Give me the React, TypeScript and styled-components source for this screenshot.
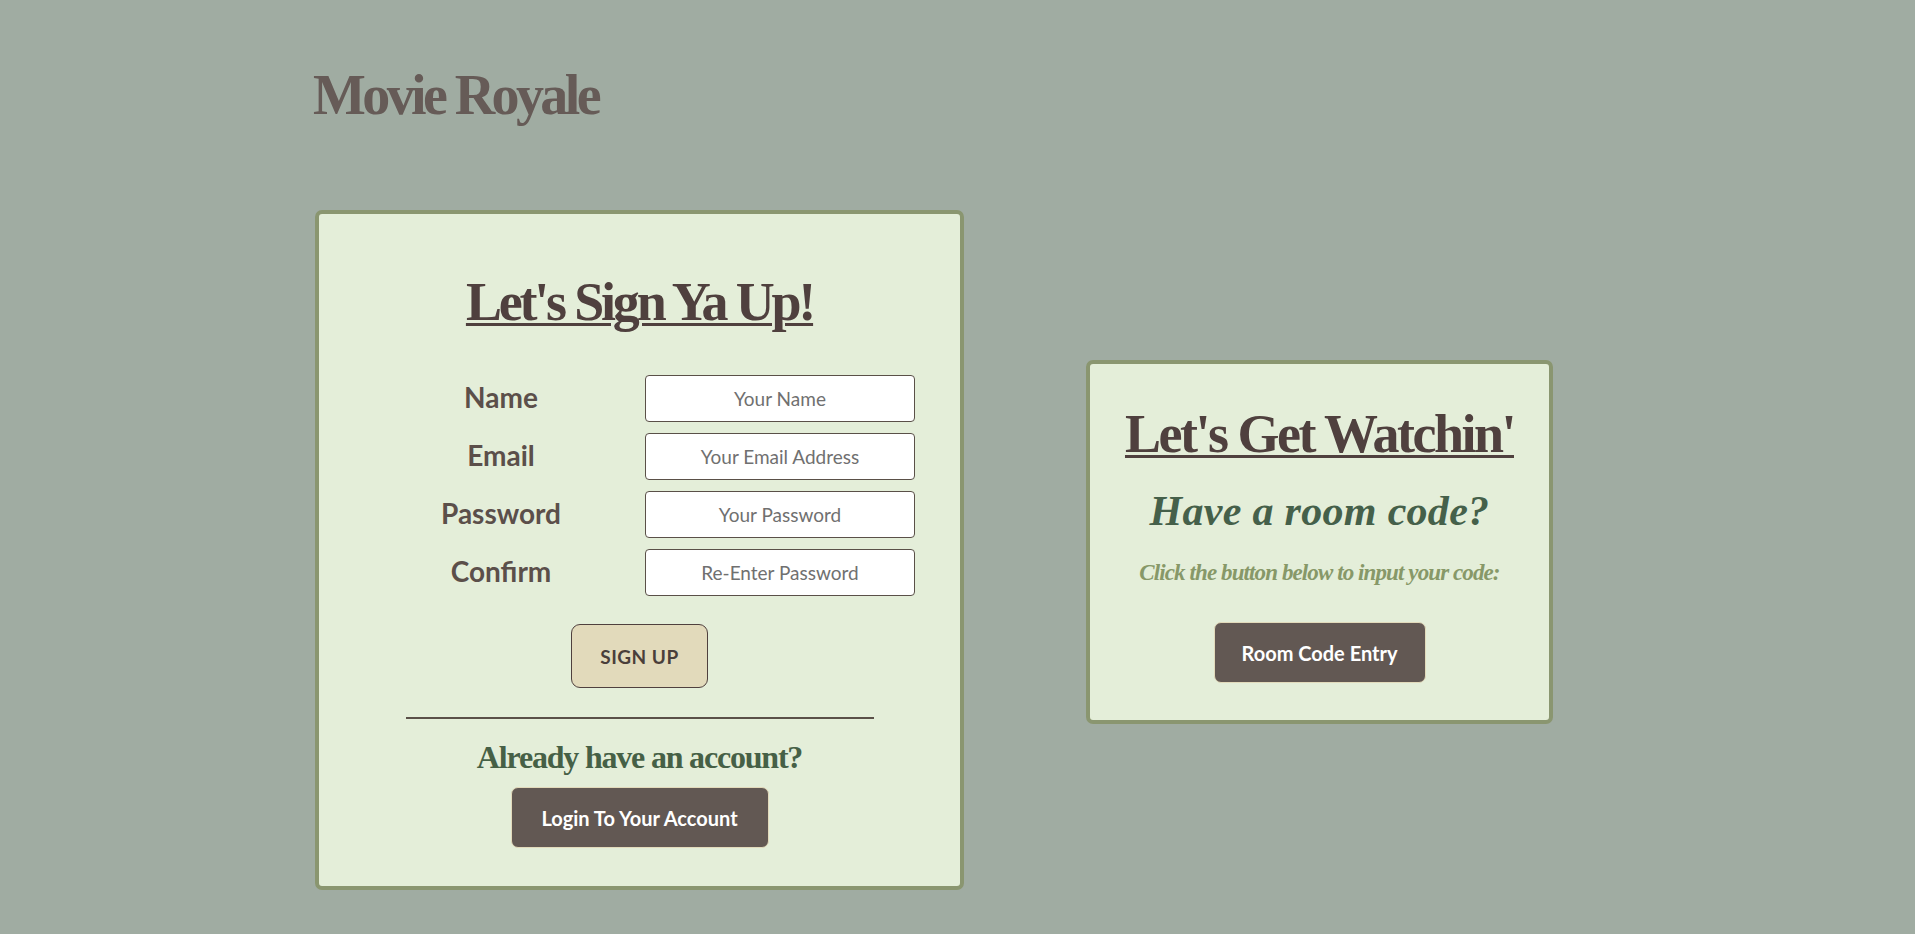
import React from "react";
import styled, { createGlobalStyle } from "styled-components";

const GlobalStyle = createGlobalStyle`
  html, body {
    margin: 0;
    padding: 0;
    background: #a0aca2;
  }
  * { box-sizing: border-box; }
`;

const serif = `"Liberation Serif", "DejaVu Serif", serif`;
const sans = `Lato, "Noto Sans", sans-serif`;

const Page = styled.div`
  min-height: 934px;
  padding: 67px 0 40px 313px;
  display: flex;
  flex-direction: column;
`;

const Brand = styled.h1`
  margin: 0;
  font-family: ${serif};
  font-weight: 700;
  font-size: 56px;
  line-height: 1;
  letter-spacing: -3.6px;
  color: #665b57;
`;

const Cards = styled.div`
  display: flex;
  align-items: flex-start;
  gap: 122px;
  margin-top: 87px;
  padding-left: 2px;
`;

const Card = styled.section<{ $w: number; $top?: number; $pt: number; $pb: number }>`
  width: ${(p) => p.$w}px;
  margin-top: ${(p) => p.$top ?? 0}px;
  background: #e4eed9;
  border: 4px solid #8a9670;
  border-radius: 7px;
  padding: ${(p) => p.$pt}px 0 ${(p) => p.$pb}px;
  display: flex;
  flex-direction: column;
  align-items: center;
`;

const Heading = styled.h2<{ $ls: number }>`
  margin: 0;
  font-family: ${serif};
  font-weight: 700;
  font-size: 54px;
  line-height: 1;
  letter-spacing: ${(p) => p.$ls}px;
  color: #4f403e;
  text-decoration: underline;
  text-decoration-thickness: 3px;
  text-underline-offset: 3px;
`;

const Form = styled.div`
  margin: 46px 0 0 23px;
  display: grid;
  grid-template-columns: 228px 270px;
  column-gap: 30px;
  row-gap: 11px;
  align-items: center;
`;

const Label = styled.label`
  text-align: center;
  font-family: ${sans};
  font-weight: 700;
  font-size: 28px;
  line-height: 1;
  color: #5b4f4a;
  transform: translateY(-2px);
`;

const Input = styled.input`
  height: 47px;
  width: 270px;
  border: 1px solid #5a5048;
  border-radius: 4px;
  background: #ffffff;
  text-align: center;
  font-family: ${sans};
  font-size: 19px;
  color: #333;
  &::placeholder {
    color: #707070;
  }
`;

const SignUpButton = styled.button`
  margin-top: 28px;
  width: 137px;
  height: 64px;
  background: #e2dabb;
  border: 1px solid #4f403e;
  border-radius: 9px;
  font-family: ${sans};
  font-weight: 700;
  font-size: 19px;
  letter-spacing: 0.5px;
  color: #4a3f3a;
`;

const Divider = styled.hr`
  margin: 29px 0 0;
  width: 468px;
  border: 0;
  height: 2px;
  background: #5a5048;
`;

const SubHeading = styled.h3`
  margin: 22px 0 0;
  font-family: ${serif};
  font-weight: 700;
  font-size: 32px;
  line-height: 1;
  letter-spacing: -1.2px;
  color: #466046;
`;

const DarkButton = styled.button<{ $w: number; $h: number; $mt: number }>`
  margin-top: ${(p) => p.$mt}px;
  width: ${(p) => p.$w}px;
  height: ${(p) => p.$h}px;
  background: #625853;
  border: 1px solid #e2dabb;
  border-radius: 7px;
  font-family: ${sans};
  font-weight: 700;
  font-size: 20px;
  color: #ffffff;
`;

const RoomQuestion = styled.p`
  margin: 29px 0 0;
  font-family: ${serif};
  font-style: italic;
  font-weight: 700;
  font-size: 42px;
  line-height: 1;
  letter-spacing: 0.3px;
  color: #45604a;
`;

const Hint = styled.p`
  margin: 29px 0 0;
  font-family: ${serif};
  font-style: italic;
  font-weight: 700;
  font-size: 23px;
  line-height: 1;
  letter-spacing: -0.9px;
  color: #879868;
`;

export default function App() {
  return (
    <>
      <GlobalStyle />
      <Page>
        <Brand>Movie Royale</Brand>
        <Cards>
          <Card $w={649} $pt={61} $pb={38}>
            <Heading $ls={-3.2}>Let's Sign Ya Up!</Heading>
            <Form>
              <Label htmlFor="name">Name</Label>
              <Input id="name" placeholder="Your Name" />
              <Label htmlFor="email">Email</Label>
              <Input id="email" placeholder="Your Email Address" />
              <Label htmlFor="pw">Password</Label>
              <Input id="pw" type="password" placeholder="Your Password" />
              <Label htmlFor="pw2">Confirm</Label>
              <Input id="pw2" type="password" placeholder="Re-Enter Password" />
            </Form>
            <SignUpButton>SIGN UP</SignUpButton>
            <Divider />
            <SubHeading>Already have an account?</SubHeading>
            <DarkButton $w={258} $h={61} $mt={14}>Login To Your Account</DarkButton>
          </Card>
          <Card $w={467} $top={150} $pt={43} $pb={37}>
            <Heading $ls={-2.5}>Let's Get Watchin'</Heading>
            <RoomQuestion>Have a room code?</RoomQuestion>
            <Hint>Click the button below to input your code:</Hint>
            <DarkButton $w={212} $h={61} $mt={38}>Room Code Entry</DarkButton>
          </Card>
        </Cards>
      </Page>
    </>
  );
}
